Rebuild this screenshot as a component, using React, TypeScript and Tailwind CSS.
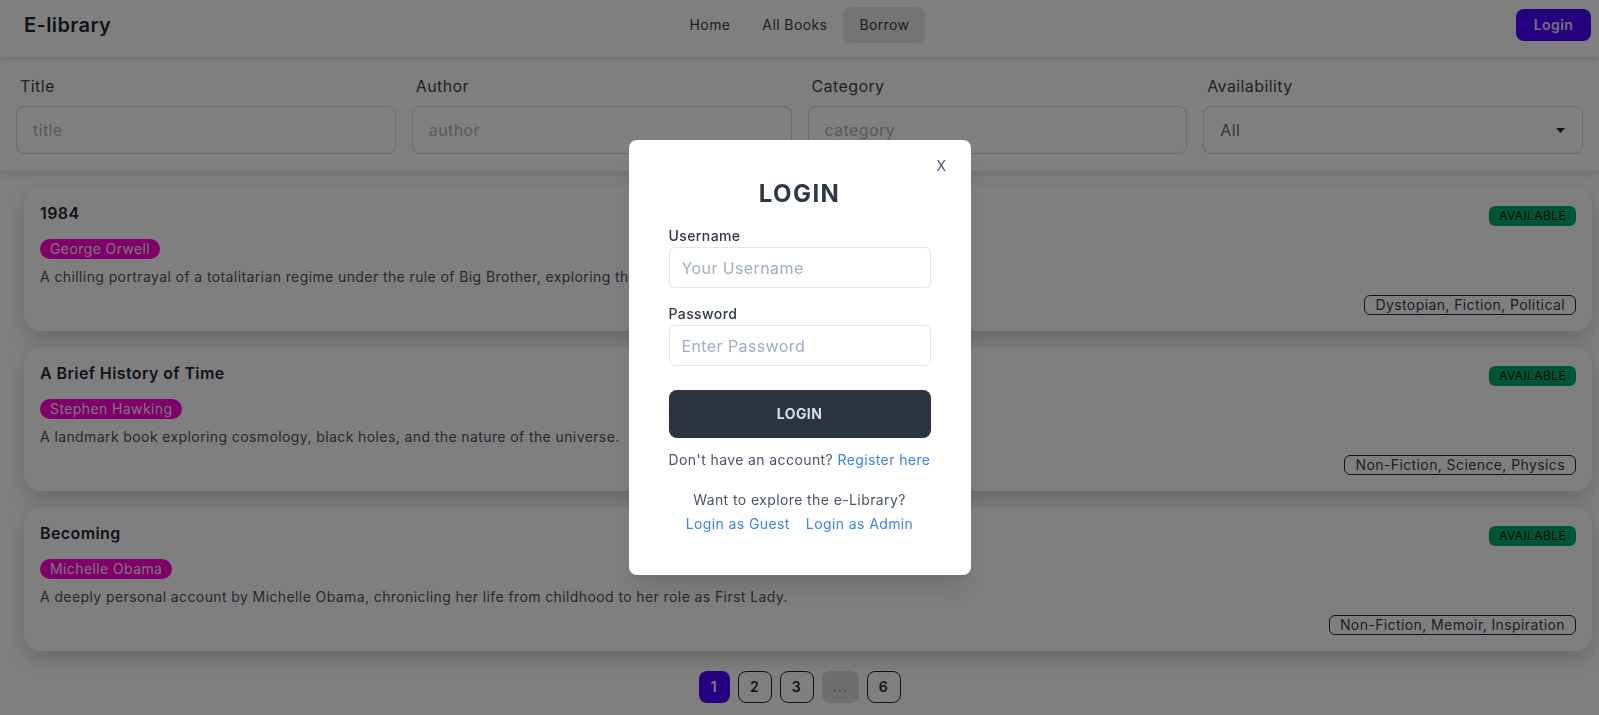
import { useState } from "react";

type Book = {
  id: number;
  title: string;
  author: string;
  description: string;
  genres: string;
};

const books: Book[] = [
  {
    id: 1,
    title: "1984",
    author: "George Orwell",
    description:
      "A chilling portrayal of a totalitarian regime under the rule of Big Brother, exploring the dangers of surveillance.",
    genres: "Dystopian, Fiction, Political",
  },
  {
    id: 2,
    title: "A Brief History of Time",
    author: "Stephen Hawking",
    description:
      "A landmark book exploring cosmology, black holes, and the nature of the universe.",
    genres: "Non-Fiction, Science, Physics",
  },
  {
    id: 3,
    title: "Becoming",
    author: "Michelle Obama",
    description:
      "A deeply personal account by Michelle Obama, chronicling her life from childhood to her role as First Lady.",
    genres: "Non-Fiction, Memoir, Inspiration",
  },
];

const BookCard = ({ book }: { book: Book }) => {
  return (
    <div className="rounded-2xl bg-white p-4 shadow-[0_8px_20px_rgba(0,0,0,0.18)]">
      <div className="-mt-0.5 flex h-6 items-center justify-between">
        <h2 className="text-base font-semibold text-[#1f2937]">{book.title}</h2>
        <span className="mt-1.5 rounded-md bg-[#00a96e] px-[10px] text-xs leading-5 text-[#00120a]">
          AVAILABLE
        </span>
      </div>
      <div className="mt-[14px] flex">
        <span className="rounded-full bg-[#ff00d3] px-[10px] text-sm leading-5 text-[#ffe8fa]">
          {book.author}
        </span>
      </div>
      <p className="mt-2 text-sm leading-5 text-[#4b5563]">{book.description}</p>
      <div className="mt-2 flex justify-end">
        <span className="rounded-md border border-[#1f2937] px-[10px] text-sm leading-[18px] text-[#334155]">
          {book.genres}
        </span>
      </div>
    </div>
  );
};

const FilterField = ({ label, placeholder }: { label: string; placeholder: string }) => (
  <div>
    <div className="px-1 py-2 text-base leading-6 text-[#3f4652]">{label}</div>
    <input
      className="h-12 w-full rounded-lg border border-[#d6d6d9] px-4 text-base text-[#1f2937] outline-none placeholder:text-[#b4b4b8]"
      placeholder={placeholder}
    />
  </div>
);

const App = () => {
  const [page] = useState(1);

  return (
    <div className="relative min-h-screen bg-white font-['Inter',sans-serif] tracking-[0.025em]">
      {/* navbar */}
      <div className="relative z-20 flex h-[57px] items-center bg-white px-2 pb-2 shadow-[0_2px_6px_rgba(0,0,0,0.12)]">
        <div className="flex-1">
          <span className="px-4 text-xl font-semibold text-[#1f2937]">E-library</span>
        </div>
        <ul className="flex text-sm text-[#3b3f46]">
          <li className="px-4 py-2 leading-5">Home</li>
          <li className="px-4 py-2 leading-5">All Books</li>
          <li className="rounded-lg bg-[#e8e8e8] px-4 py-2 leading-5">Borrow</li>
        </ul>
        <div className="flex flex-1 justify-end">
          <button className="h-8 w-[75px] rounded-lg bg-[#4a00ff] text-sm font-semibold text-[#e0e4ff]">
            Login
          </button>
        </div>
      </div>

      {/* filters */}
      <div className="relative z-10 grid grid-cols-4 gap-4 bg-white px-4 pt-[9px] pb-[17px] shadow-[0_3px_8px_rgba(0,0,0,0.12)]">
        <FilterField label="Title" placeholder="title" />
        <FilterField label="Author" placeholder="author" />
        <FilterField label="Category" placeholder="category" />
        <div>
          <div className="px-1 py-2 text-base leading-6 text-[#3f4652]">Availability</div>
          <div className="flex h-12 w-full items-center justify-between rounded-lg border border-[#d6d6d9] pr-[17px] pl-4 text-base text-[#6b6f76]">
            <span>All</span>
            <svg width="9" height="5" viewBox="0 0 9 5">
              <path d="M0 0h9L4.5 5z" fill="#1f2937" />
            </svg>
          </div>
        </div>
      </div>

      {/* books */}
      <div className="mt-4 mr-[7px] ml-6 flex flex-col gap-4">
        {books.map((book) => (
          <BookCard key={book.id} book={book} />
        ))}
      </div>

      {/* pagination */}
      <div className="mt-5 flex justify-center gap-2 pb-6">
        {["1", "2", "3", "...", "6"].map((p) => {
          if (p === "...") {
            return (
              <button
                key={p}
                className="h-8 w-[37px] rounded-lg bg-[#dcdcdc] text-sm font-semibold text-[#a6a6a6]"
              >
                ...
              </button>
            );
          }
          const active = Number(p) === page;
          return (
            <button
              key={p}
              className={
                active
                  ? "h-8 w-[31px] rounded-lg bg-[#4a00ff] text-sm font-semibold text-white"
                  : "h-8 w-[34px] rounded-lg border border-[#1f2937] text-sm font-semibold text-[#1f2937]"
              }
            >
              {p}
            </button>
          );
        })}
      </div>

      {/* login modal */}
      <div className="fixed inset-0 z-50 flex items-center justify-center bg-black/50">
        <div className="relative w-[342px] rounded-lg bg-white px-10 pt-[38px] pb-[41px] shadow-xl">
          <button className="absolute top-4 right-6 text-sm leading-5 text-[#4a5568]">X</button>
          <h1 className="text-center text-2xl leading-8 font-bold tracking-[0.06em] text-[#2d3748]">
            LOGIN
          </h1>
          <label className="mt-4 block text-sm leading-5 font-medium text-[#2d3748]">Username</label>
          <input
            className="mt-[1px] h-[41px] w-full rounded-md border border-[#e2e8f0] px-3 text-base outline-none placeholder:text-[#a0aec0]"
            placeholder="Your Username"
          />
          <label className="mt-4 block text-sm leading-5 font-medium text-[#2d3748]">Password</label>
          <input
            type="password"
            className="mt-[1px] h-[41px] w-full rounded-md border border-[#e2e8f0] px-3 text-base outline-none placeholder:text-[#a0aec0]"
            placeholder="Enter Password"
          />
          <button className="mt-6 h-12 w-full rounded-lg bg-[#2b3440] text-sm font-bold text-[#d7dde4]">
            LOGIN
          </button>
          <p className="mt-3 text-center text-sm leading-5 text-[#4a5568]">
            Don't have an account? <span className="text-[#3b82f6]">Register here</span>
          </p>
          <p className="mt-5 text-center text-sm leading-5 text-[#4a5568]">
            Want to explore the e-Library?
          </p>
          <div className="mt-1 flex justify-center gap-4 text-sm leading-5 text-[#3b82f6]">
            <span>Login as Guest</span>
            <span>Login as Admin</span>
          </div>
        </div>
      </div>
    </div>
  );
};

export default App;
